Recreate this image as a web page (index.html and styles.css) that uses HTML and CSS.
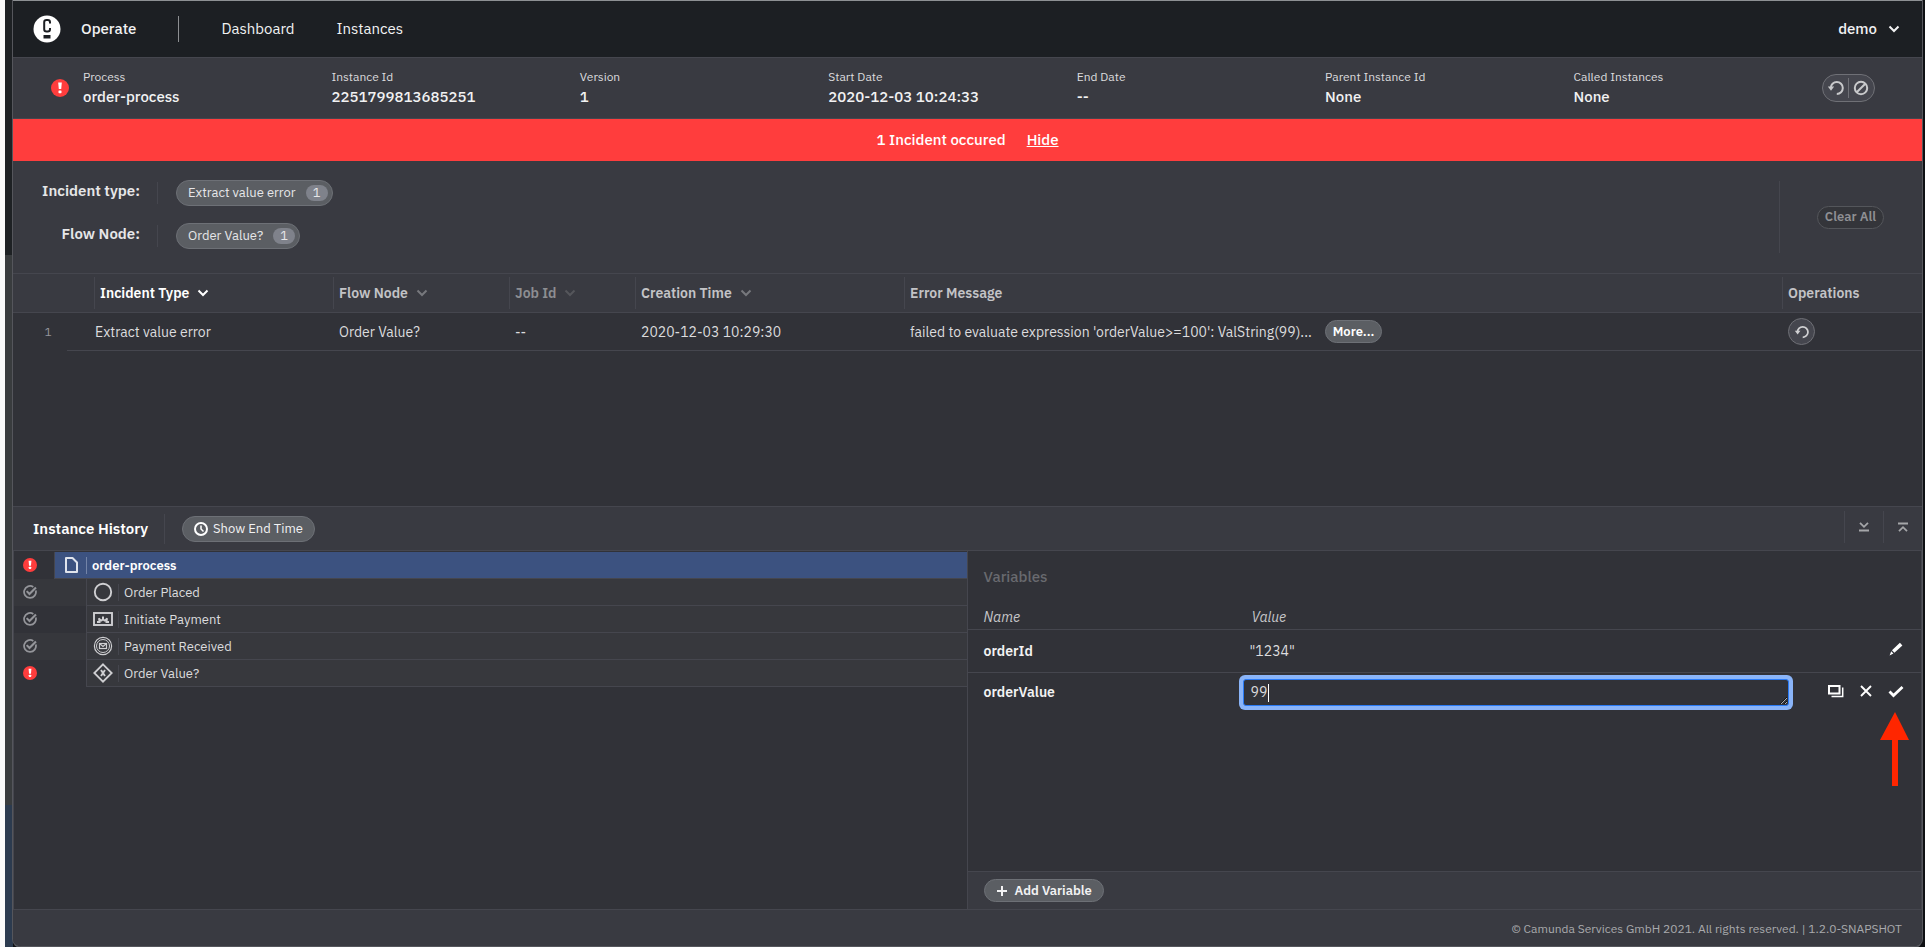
FILE: index.html
```html
<!DOCTYPE html>
<html lang="en">
<head>
<meta charset="utf-8">
<title>Operate: Instance 2251799813685251</title>
<link rel="stylesheet" href="styles.css">
</head>
<body>
<svg class="defs" aria-hidden="true">
  <symbol id="incident" viewBox="0 0 18 18"><circle cx="9" cy="9" r="9" fill="#ff3d3d"/><path d="M7.200 3.600h3.600l-.6 6.400H7.800z" fill="#fff"/><rect x="7.500" y="11.400" width="3" height="2.800" rx=".6" fill="#fff"/></symbol>
  <symbol id="completed" viewBox="0 0 16 16"><path d="M14.600 6.200A6.800 6.800 0 1 1 11.800 2.300" fill="none" stroke="currentColor" stroke-width="2"/><path d="M4.200 7l3.200 3.200 7.400-7.400" fill="none" stroke="currentColor" stroke-width="2.400"/></symbol>
  <symbol id="chevron" viewBox="0 0 12 8"><path d="M1.500 1.500L6 6l4.500-4.500" fill="none" stroke="currentColor" stroke-width="2"/></symbol>
  <symbol id="retry" viewBox="0 0 18 16"><path d="M3.800 8A6 6 0 1 1 9.800 14" fill="none" stroke="currentColor" stroke-width="2"/><path d="M.8 6.500h6.400L4 10.800z" fill="currentColor"/></symbol>
</svg>

<div class="desktop">
  <div class="page-edge"></div>
  <div class="window-edge"></div>
  <div class="app">
    <header class="topbar">
      <svg class="logo" viewBox="0 0 28 28"><circle cx="14" cy="14" r="13.500" fill="#fff"/><path d="M17 8.500V7.200a2.300 2.300 0 0 0-2.300-2.300h-1.200a2.300 2.300 0 0 0-2.300 2.300v7a2.300 2.300 0 0 0 2.300 2.300h1.200a2.300 2.300 0 0 0 2.300-2.300v-1.300" fill="none" stroke="#1c1f23" stroke-width="2"/><rect x="10.500" y="20" width="7" height="3.500" fill="#1c1f23"/></svg>
      <nav class="nav">
        <a href="#" class="brand">Operate</a>
        <a href="#">Dashboard</a>
        <a href="#">Instances</a>
      </nav>
      <button class="user">demo<svg class="chevron"><use href="#chevron"/></svg></button>
    </header>

    <section class="instance">
      <svg class="instance-state"><use href="#incident"/></svg>
      <dl class="facts">
        <div><dt>Process</dt><dd>order-process</dd></div>
        <div><dt>Instance Id</dt><dd>2251799813685251</dd></div>
        <div><dt>Version</dt><dd>1</dd></div>
        <div><dt>Start Date</dt><dd>2020-12-03 10:24:33</dd></div>
        <div><dt>End Date</dt><dd>--</dd></div>
        <div><dt>Parent Instance Id</dt><dd>None</dd></div>
        <div><dt>Called Instances</dt><dd>None</dd></div>
      </dl>
      <div class="ops">
        <button aria-label="Retry"><svg class="op-icon"><use href="#retry"/></svg></button>
        <button aria-label="Cancel"><svg class="op-icon" viewBox="0 0 18 16"><g fill="none" stroke="currentColor" stroke-width="2"><circle cx="9" cy="8" r="6.200"/><path d="M4.700 12.300l8.600-8.600"/></g></svg></button>
      </div>
    </section>

    <div class="banner"><span>1 Incident occured</span><button>Hide</button></div>

    <section class="incidents">
      <div class="filters">
        <div class="filter-rows">
          <div class="filter"><span class="filter-label">Incident type:</span><button class="pill">Extract value error<span class="count">1</span></button></div>
          <div class="filter"><span class="filter-label">Flow Node:</span><button class="pill">Order Value?<span class="count">1</span></button></div>
        </div>
        <div class="clear"><button>Clear All</button></div>
      </div>
      <table class="incident-table">
        <colgroup><col class="c-index"><col class="c-type"><col class="c-node"><col class="c-job"><col class="c-time"><col><col class="c-ops"></colgroup>
        <thead>
          <tr>
            <th></th>
            <th class="active"><div>Incident Type<svg class="chevron"><use href="#chevron"/></svg></div></th>
            <th><div>Flow Node<svg class="chevron"><use href="#chevron"/></svg></div></th>
            <th class="disabled"><div>Job Id<svg class="chevron"><use href="#chevron"/></svg></div></th>
            <th><div>Creation Time<svg class="chevron"><use href="#chevron"/></svg></div></th>
            <th><div>Error Message</div></th>
            <th><div>Operations</div></th>
          </tr>
        </thead>
        <tbody>
          <tr>
            <td class="index">1</td>
            <td class="type">Extract value error</td>
            <td>Order Value?</td>
            <td>--</td>
            <td>2020-12-03 10:29:30</td>
            <td><div class="message"><span>failed to evaluate expression 'orderValue&gt;=100': ValString(99)...</span><button class="more">More...</button></div></td>
            <td><button class="retry" aria-label="Retry"><svg class="op-icon"><use href="#retry"/></svg></button></td>
          </tr>
        </tbody>
      </table>
    </section>

    <section class="history">
      <header class="history-head">
        <h2>Instance History</h2>
        <button class="pill end-time"><svg class="clock" viewBox="0 0 14 14"><g fill="none" stroke="currentColor"><circle cx="7" cy="7" r="6" stroke-width="2"/><path d="M7 3.500V7l2.500 2.500" stroke-width="1.500"/></g></svg>Show End Time</button>
        <div class="panel-buttons">
          <button aria-label="Collapse"><svg class="panel-icon" viewBox="0 0 10 10"><path d="M1 .8l4 4 4-4M0 8.500h10" fill="none" stroke="currentColor" stroke-width="1.800"/></svg></button>
          <button aria-label="Expand"><svg class="panel-icon" viewBox="0 0 10 10"><path d="M1 9.200l4-4 4 4M0 1.500h10" fill="none" stroke="currentColor" stroke-width="1.800"/></svg></button>
        </div>
      </header>
      <div class="panels">
        <ul class="tree">
          <li class="root"><svg class="state"><use href="#incident"/></svg><div class="node"><svg class="node-icon" viewBox="0 0 20 20"><path d="M5 3h6.500L16 7.500V17H5z" fill="none" stroke="currentColor" stroke-width="2" stroke-linejoin="round"/></svg><span>order-process</span></div></li>
          <li><svg class="state"><use href="#completed"/></svg><div class="node"><svg class="node-icon" viewBox="0 0 20 20"><circle cx="10" cy="10" r="8.200" fill="none" stroke="currentColor" stroke-width="1.900"/></svg><span>Order Placed</span></div></li>
          <li><svg class="state"><use href="#completed"/></svg><div class="node"><svg class="node-icon" viewBox="0 0 20 20"><rect x="1" y="4" width="18" height="12" fill="none" stroke="currentColor" stroke-width="1.900"/><path d="M4 14v-2h1.500L5 9.500l1.500-.7L8 10.200h1V7.500h2v2.700h1l1.500-1.400 1.500.7-.5 2.500H16v2h-3.500v-1.500h-1.300L10 11.500l-1.200 1H7.500V14z" fill="currentColor"/></svg><span>Initiate Payment</span></div></li>
          <li><svg class="state"><use href="#completed"/></svg><div class="node"><svg class="node-icon" viewBox="0 0 20 20"><g fill="none" stroke="currentColor"><circle cx="10" cy="10" r="8.600" stroke-width="1.200"/><circle cx="10" cy="10" r="6.500"/><rect x="6.500" y="7.500" width="7" height="5" stroke-width="1.200"/><path d="M6.500 7.500L10 10.500l3.500-3" stroke-width="1.200"/></g></svg><span>Payment Received</span></div></li>
          <li><svg class="state"><use href="#incident"/></svg><div class="node"><svg class="node-icon" viewBox="0 0 20 20"><g fill="none" stroke="currentColor"><path d="M10 1.300L18.700 10 10 18.700 1.300 10z" stroke-width="1.800"/><path d="M8 7l4 6M12 7l-4 6" stroke-width="1.900"/></g></svg><span>Order Value?</span></div></li>
        </ul>

        <div class="variables">
          <h3>Variables</h3>
          <table class="var-table">
            <colgroup><col class="v-name"><col><col class="v-actions"></colgroup>
            <thead><tr><th>Name</th><th>Value</th><th></th></tr></thead>
            <tbody>
              <tr>
                <td class="var-name">orderId</td>
                <td class="var-value">"1234"</td>
                <td><div class="actions"><button aria-label="Edit"><svg class="act" viewBox="0 0 16 16"><path d="M4 9.200L11.900 1.800l2.500 2.600-8 7.300zM3.200 10.200l2.200 2.300-3.800 1.900z" fill="currentColor"/></svg></button></div></td>
              </tr>
              <tr>
                <td class="var-name"><label for="value">orderValue</label></td>
                <td class="edit-cell"><div class="editor"><textarea id="value" rows="1">99</textarea><i class="caret"></i></div></td>
                <td><div class="actions">
                  <button aria-label="Open editor"><svg class="act" viewBox="0 0 16 16"><path d="M1 3h10.500v7.500H1z" fill="none" stroke="currentColor" stroke-width="2"/><path d="M14.700 4.500v9H3.500" fill="none" stroke="currentColor" stroke-width="1.500"/></svg></button>
                  <button aria-label="Cancel"><svg class="act" viewBox="0 0 16 16"><path d="M3 3l10 10M13 3L3 13" fill="none" stroke="currentColor" stroke-width="1.900"/></svg></button>
                  <button aria-label="Save"><svg class="act" viewBox="0 0 16 16"><path d="M1.500 8.500l4 4 9-8.500" fill="none" stroke="currentColor" stroke-width="2.800"/></svg>
                    <svg class="pointer" viewBox="0 0 29 74"><path d="M15 0l14 28h-11v46h-6V28H0z" fill="#ff2600"/></svg></button>
                </div></td>
              </tr>
            </tbody>
          </table>
          <div class="add-bar"><button class="add"><svg class="plus" viewBox="0 0 10 10"><path d="M5 0v10M0 5h10" stroke="currentColor" stroke-width="2"/></svg>Add Variable</button></div>
        </div>
      </div>
    </section>

    <footer class="foot">© Camunda Services GmbH 2021. All rights reserved. | 1.2.0-SNAPSHOT</footer>
  </div>
</div>
</body>
</html>
```
FILE: styles.css
```css
* { box-sizing: border-box; }
:root {
  --dark: #1c1f23;
  --base: #313238;
  --panel: #393a41;
  --line: #45464e;
  --pill: #5b5e63;
  --pill-line: #6d7076;
}
body {
  margin: 0;
  background: #0e1013;
  color: #f2f2f3;
  font: 14px/20px "IBM Plex Sans", "Noto Sans", sans-serif;
}
button { font: inherit; color: inherit; background: none; border: 0; padding: 0; margin: 0; }
a { color: inherit; text-decoration: none; }
h2, h3, dl, dd, ul { margin: 0; padding: 0; }
svg { display: block; flex: none; }
.defs { position: absolute; width: 0; height: 0; }

.desktop { display: flex; min-height: 100vh; padding-right: 3px; }
.page-edge { width: 5px; background: linear-gradient(#fafafa, #fafafa) no-repeat, #fff; }
.window-edge { width: 8px; background: linear-gradient(#1e2124 255px, #393c3e 255px, #393c3e 805px, #2c3b4f 805px); }
.app {
  flex: 1;
  min-width: 0;
  display: flex;
  flex-direction: column;
  background: var(--base);
  border-top: 1px solid #8d9093;
  border-bottom: 1px solid #55565c;
  border-radius: 0 0 8px 8px;
  box-shadow: 0 0 0 1px #55565c;
  overflow: hidden;
}

.topbar {
  display: flex;
  align-items: center;
  height: 57px;
  padding: 0 22px 0 20px;
  background: var(--dark);
  border-bottom: 1px solid var(--line);
  font-size: 15px;
}
.logo { width: 28px; height: 28px; }
.nav { display: flex; align-items: center; flex: 1; gap: 42px; margin-left: 20px; }
.brand { display: flex; align-items: center; font-weight: 500; }
.brand::after { content: ""; width: 1px; height: 26px; margin-left: 42px; background: #8d8f92; }
.user { display: flex; align-items: center; gap: 11px; font-weight: 500; }
.chevron { width: 12px; height: 8px; }

.instance {
  display: flex;
  align-items: center;
  height: 61px;
  padding: 0 47px 0 38px;
  background: var(--panel);
  border-bottom: 1px solid var(--line);
}
.instance-state { width: 18px; height: 18px; margin-right: 14px; }
.facts { display: flex; flex: 1; }
.facts div { flex: 1 0 0; min-width: 0; }
.facts dt { font-size: 12px; line-height: 18px; color: #dcdcde; }
.facts dd { font-size: 15px; line-height: 22px; font-weight: 500; }
.ops {
  display: flex;
  align-items: center;
  height: 28px;
  padding: 0 1px;
  border: 1px solid #6f7076;
  border-radius: 14px;
  background: #45464e;
  color: #c8c9cb;
}
.ops button { padding: 2px 3px; }
.ops button + button { border-left: 1px solid #6f7076; }
.op-icon { width: 18px; height: 16px; }

.banner {
  display: flex;
  align-items: center;
  justify-content: center;
  gap: 21px;
  height: 42px;
  background: #ff3d3d;
  color: #fff;
  font-size: 15px;
  font-weight: 500;
}
.banner button { text-decoration: underline; }

.incidents { flex: 345 0 0; display: flex; flex-direction: column; }
.filters {
  display: flex;
  align-items: center;
  justify-content: space-between;
  height: 112px;
  padding-bottom: 6px;
  background: var(--panel);
}
.filter-rows { display: grid; gap: 17px; }
.filter { display: flex; align-items: center; }
.filter-label { width: 145px; padding: 0 17px 4px 0; text-align: right; font-size: 15px; line-height: 18px; font-weight: 600; color: #e6e6e8; border-right: 1px solid var(--line); }
.pill {
  display: flex;
  align-items: center;
  gap: 10px;
  height: 26px;
  padding: 0 4px 0 11px;
  border: 1px solid var(--pill-line);
  border-radius: 13px;
  background: var(--pill);
}
.filter .pill { margin-left: 18px; font-size: 13px; color: #e6e6e8; }
.count { width: 22px; height: 16px; border-radius: 8px; background: #7f828b; line-height: 16px; text-align: center; }
.clear { display: flex; align-items: center; height: 72px; margin-top: 6px; padding: 0 38px 0 37px; border-left: 1px solid var(--line); }
.clear button { height: 23px; padding: 0 7px; border: 1px solid #54565b; border-radius: 12px; background: #34353a; color: #8f9094; font-size: 13px; line-height: 20px; font-weight: 600; }

table { width: 100%; border-collapse: collapse; table-layout: fixed; }
th, td { padding: 0; text-align: left; }
.c-index { width: 81px; }
.c-type { width: 239px; }
.c-node { width: 176px; }
.c-job { width: 126px; }
.c-time { width: 269px; }
.c-ops { width: 140px; }
.incident-table thead tr { height: 39px; background: var(--panel); border-top: 1px solid var(--line); border-bottom: 1px solid var(--line); }
.incident-table th { font-size: 14px; font-weight: 600; color: #c3c3c6; }
.incident-table th div { display: flex; align-items: center; gap: 8px; height: 32px; padding-left: 5px; border-left: 1px solid var(--line); }
.incident-table th .chevron { color: #77787d; }
.incident-table th.active, .incident-table th.active .chevron { color: #fff; }
.incident-table th.disabled { color: #8d8e92; }
.incident-table th.disabled .chevron { color: #55565b; }
.incident-table tbody tr { height: 38px; background: linear-gradient(var(--line), var(--line)) no-repeat 54px 100% / 100% 1px; }
.incident-table td { padding-left: 6px; color: #dcdcde; white-space: nowrap; }
.incident-table td.index { padding: 0 11px 0 0; text-align: center; font-size: 12px; color: #94959a; }
.incident-table td.type { padding-left: 1px; }
.message { display: flex; align-items: center; gap: 13px; }
.more { height: 23px; padding: 0 7px; border: 1px solid var(--pill-line); border-radius: 12px; background: var(--pill); color: #fff; font-size: 13px; line-height: 20px; font-weight: 600; }
.retry { display: flex; align-items: center; justify-content: center; width: 27px; height: 27px; border: 1px solid #6f7076; border-radius: 14px; background: var(--line); color: #d0d0d2; }
.retry .op-icon { width: 16px; height: 14px; }

.history { flex: 403 0 0; display: flex; flex-direction: column; }
.history-head { display: flex; align-items: center; height: 45px; padding-left: 20px; background: var(--panel); border-top: 1px solid var(--line); border-bottom: 1px solid var(--line); }
.history-head h2 { padding: 5px 16px 5px 0; border-right: 1px solid var(--line); font-size: 15px; line-height: 20px; font-weight: 600; color: #fff; }
.end-time { gap: 5px; margin-left: 17px; padding: 0 11px; font-size: 13px; }
.clock { width: 14px; height: 14px; color: #fff; }
.panel-buttons { display: flex; margin-left: auto; padding-bottom: 4px; color: #a5a6a9; }
.panel-buttons button { display: flex; align-items: center; justify-content: center; width: 39px; height: 32px; border-left: 1px solid var(--line); }
.panel-icon { width: 10px; height: 10px; }
.panels { flex: 1; display: grid; grid-template-columns: 1fr 1fr; }

.tree { list-style: none; padding-top: 1px; border: solid var(--line); border-width: 0 1px; font-size: 13px; }
.tree li { display: flex; align-items: stretch; height: 27px; color: #dcdcde; }
.tree li:nth-child(even) { background: #36373c; }
.state { width: 14px; height: 14px; margin: 6px 17px 0 9px; color: #94959a; }
.node { flex: 1; display: flex; align-items: center; gap: 5px; margin-left: 32px; padding-left: 6px; background: #37383d; border-left: 1px solid var(--line); border-bottom: 1px solid var(--line); }
.node span { padding-left: 5px; border-left: 1px solid var(--line); line-height: 17px; }
.node-icon { width: 20px; height: 20px; color: #cfcfd2; }
.root .node { margin-left: 0; background: #3c5280; color: #fff; font-weight: 600; }
.root .node span { border-color: #7384a8; }
.root .node-icon { color: #dfe3ec; }

.variables { display: flex; flex-direction: column; border-right: 1px solid var(--line); }
.variables h3 { padding: 16px 0 0 16px; font-size: 15px; line-height: 20px; font-weight: 500; color: #696a6f; }
.v-name { width: 271px; }
.v-actions { width: 128px; }
.var-table { margin-top: 18px; }
.var-table tr { border-bottom: 1px solid var(--line); height: 43px; }
.var-table tbody tr:last-child { border: 0; height: 40px; }
.var-table thead tr { height: 24px; }
.var-table th { padding-left: 16px; font-weight: 400; font-style: italic; color: #c6c6c9; }
.var-table th + th { padding-left: 13px; }
.var-name { padding-left: 16px; font-weight: 600; }
.var-value { padding-left: 11px; color: #dcdcde; }
.editor { position: relative; height: 35px; padding: 4px; border-radius: 6px; background: #8ab4f8; }
.editor textarea { display: block; width: 100%; height: 27px; padding: 2px 7px; border: 1px solid #2a7bf6; border-radius: 3px; outline: 0; background: var(--base); color: #dcdcde; font: inherit; resize: vertical; overflow: hidden; }
.caret { position: absolute; left: 29px; top: 9px; width: 1px; height: 18px; background: #fff; }
.actions { display: flex; justify-content: flex-end; gap: 14px; padding: 0 17px 3px 0; color: #fff; }
.actions button { position: relative; }
.act { width: 16px; height: 16px; }
.pointer { position: absolute; left: -8px; top: 29px; width: 29px; height: 74px; }
.add-bar { display: flex; align-items: center; height: 38px; margin-top: auto; padding-left: 16px; background: var(--panel); border-top: 1px solid var(--line); }
.add { display: flex; align-items: center; gap: 8px; height: 23px; padding: 0 11px 0 12px; border: 1px solid var(--pill-line); border-radius: 12px; background: var(--pill); font-size: 13px; line-height: 20px; font-weight: 600; }
.plus { width: 10px; height: 10px; }

.foot { height: 37px; padding: 0 20px; background: var(--panel); border-top: 1px solid var(--line); text-align: right; font-size: 12px; line-height: 37px; color: #a9aaad; }
```
